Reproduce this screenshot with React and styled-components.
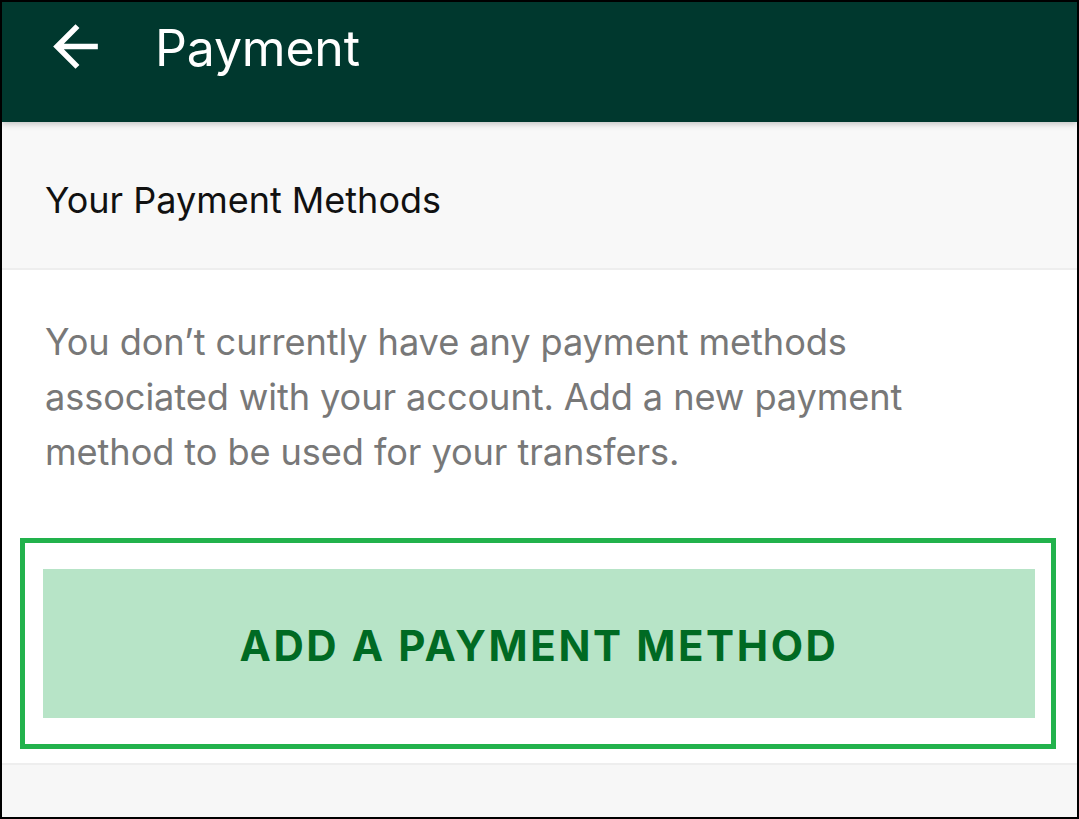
import React from "react";
import styled, { createGlobalStyle } from "styled-components";

const GlobalStyle = createGlobalStyle`
  html, body {
    margin: 0;
    padding: 0;
    background: #ffffff;
  }
  body {
    font-family: Inter, "Noto Sans", "Liberation Sans", sans-serif;
  }
`;

const Frame = styled.div`
  box-sizing: border-box;
  width: 1079px;
  height: 819px;
  border: 2px solid #000000;
  display: flex;
  flex-direction: column;
  overflow: hidden;
  background: #ffffff;
`;

const AppBar = styled.header`
  position: relative;
  z-index: 1;
  flex: 0 0 120px;
  box-sizing: border-box;
  display: flex;
  align-items: center;
  padding: 0 0 28px 40px;
  gap: 46px;
  background: #00382e;
  box-shadow: 0 2px 6px rgba(0, 0, 0, 0.22);
`;

const BackButton = styled.button`
  display: flex;
  align-items: center;
  justify-content: center;
  width: 67px;
  height: 67px;
  padding: 0;
  margin-top: -4px;
  border: none;
  background: transparent;
  color: #ffffff;
  cursor: pointer;
  svg {
    width: 67px;
    height: 67px;
    fill: currentColor;
  }
`;

const Title = styled.h1`
  margin: 0;
  font-size: 50px;
  font-weight: 400;
  color: #ffffff;
  letter-spacing: -0.2px;
`;

const SectionHeader = styled.div`
  flex: 0 0 148px;
  display: flex;
  align-items: center;
  padding-left: 43px;
  padding-top: 10px;
  box-sizing: border-box;
  background: #f8f8f8;
  border-bottom: 2px solid #eeeeee;
  font-size: 36px;
  color: #111111;
`;

const Content = styled.section`
  background: #ffffff;
  padding: 45px 21px 14px 18px;
  display: flex;
  flex-direction: column;
  gap: 58px;
`;

const Message = styled.p`
  margin: 0;
  padding-left: 25px;
  font-size: 36.2px;
  line-height: 55px;
  color: #787878;
  letter-spacing: -0.1px;
`;

const Highlight = styled.div`
  box-sizing: border-box;
  height: 211px;
  border: 5px solid #22b24c;
  padding: 26px 16px 26px 18px;
  display: flex;
`;

const AddButton = styled.button`
  flex: 1;
  border: none;
  background: #b7e4c7;
  color: #006a23;
  font-family: Inter, "Noto Sans", "Liberation Sans", sans-serif;
  font-size: 42px;
  font-weight: 700;
  letter-spacing: 2.6px;
  cursor: pointer;
  padding: 4px 0 0;
`;

const Footer = styled.div`
  flex: 1;
  background: #f7f7f7;
  border-top: 2px solid #eeeeee;
`;

const ArrowBack = () => (
  <svg viewBox="0 0 24 24" aria-hidden="true">
    <path d="M20 11H7.83l5.59-5.59L12 4l-8 8 8 8 1.41-1.41L7.83 13H20v-2z" />
  </svg>
);

const App = () => (
  <>
    <GlobalStyle />
    <Frame>
      <AppBar>
        <BackButton aria-label="Back">
          <ArrowBack />
        </BackButton>
        <Title>Payment</Title>
      </AppBar>
      <SectionHeader>Your Payment Methods</SectionHeader>
      <Content>
        <Message>
          You don’t currently have any payment methods
          <br />
          associated with your account. Add a new payment
          <br />
          method to be used for your transfers.
        </Message>
        <Highlight>
          <AddButton>ADD A PAYMENT METHOD</AddButton>
        </Highlight>
      </Content>
      <Footer />
    </Frame>
  </>
);

export default App;
